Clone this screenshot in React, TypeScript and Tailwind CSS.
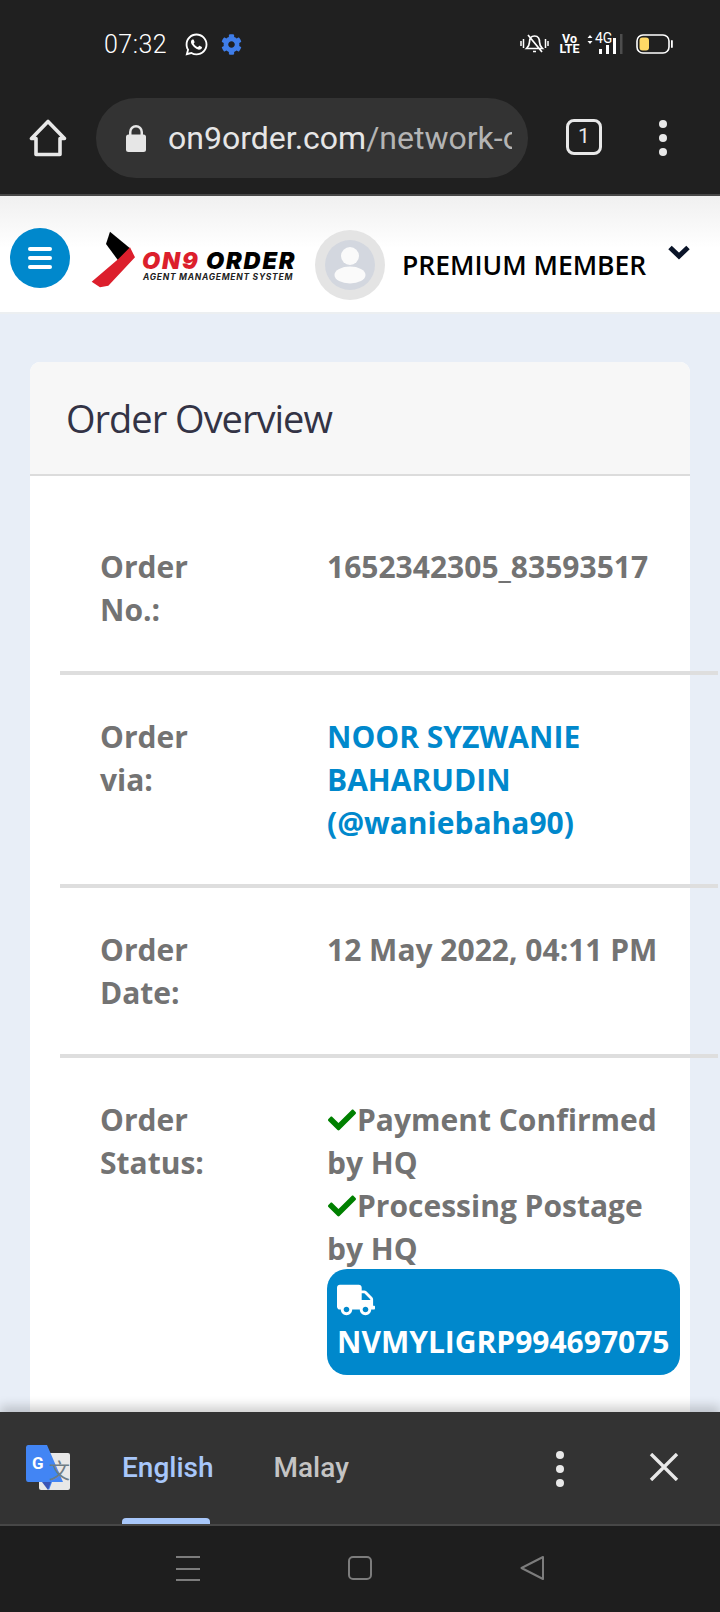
import { FaWhatsapp, FaCog, FaTruck, FaCheck } from "react-icons/fa";

function Row({ label, children, last }: { label: React.ReactNode; children: React.ReactNode; last?: boolean }) {
  return (
    <div className={`grid w-[658px] grid-cols-[227px_340px] pl-10 ${last ? "pt-[40px]" : "border-b-4 border-[#dedede] pb-[40px] pt-[40px]"}`}>
      <div className="font-bold text-[#737373]">{label}</div>
      <div className="font-bold text-[#737373]">{children}</div>
    </div>
  );
}

function Status({ children }: { children: React.ReactNode }) {
  return (
    <div>
      <FaCheck className="inline-block h-[28px] w-[30px] align-[-3px] text-[#008000]" />
      {children}
    </div>
  );
}

export default function App() {
  return (
    <div className="flex h-[1612px] w-[720px] flex-col overflow-hidden bg-[#e8eef7] font-['Open_Sans',sans-serif]">
      {/* Browser chrome */}
      <div className="h-[196px] shrink-0 border-b-2 border-[#474747] bg-[#202020]">
        <div className="flex h-[88px] items-center pl-[104px] pr-[47px] font-['Roboto',sans-serif] text-white">
          <span className="text-[25px] font-light leading-none tracking-[0.5px]">07:32</span>
          <FaWhatsapp className="ml-[17px] h-[25px] w-[25px]" />
          <FaCog className="ml-[12px] h-[21px] w-[21px] text-[#3f7de8]" />
          <div className="ml-auto flex items-center">
            <svg width="31" height="22" viewBox="0 0 31 22" fill="none" stroke="white" strokeWidth="1.7" className="mr-[11px]">
              <path d="M15.5 3c-4 0-5 3-5 6 0 3-1.500 5-3 6.500h16c-1.500-1.500-3-3.500-3-6.500 0-3-1-6-5-6zM14 18.500h3M9 2l14 17" />
              <path d="M2 8v5M4.500 6v9M29 8v5M26.500 6v9" strokeWidth="1.500" />
            </svg>
            <div className="mr-[9px] flex w-[17px] flex-col items-center font-['Roboto',sans-serif] text-[12.500px] font-bold leading-[10.500px]">
              <span>Vo</span>
              <span>LTE</span>
            </div>
            <div className="relative mr-[13px] h-[20px] w-[36px]">
              <span className="absolute left-[8px] top-[-3px] text-[14px] leading-[15px]">4G</span>
              <svg width="36" height="20" viewBox="0 0 36 20" fill="white">
                <path d="M3 1l2.500 3h-5zM3 10l2.500-3h-5z" />
                <rect x="12" y="15" width="3" height="5" />
                <rect x="19" y="11" width="3" height="9" />
                <rect x="26" y="4" width="3" height="16" />
                <rect x="33" y="0" width="2.500" height="20" fill="#4d4d4d" />
              </svg>
            </div>
            <svg width="37" height="20" viewBox="0 0 37 20">
              <rect x="1" y="1" width="32" height="18" rx="6" fill="none" stroke="white" strokeWidth="1.600" />
              <rect x="3.500" y="3.500" width="9.500" height="13" rx="3" fill="#ffd966" />
              <rect x="35" y="6" width="1.800" height="8" rx="0.900" fill="white" />
            </svg>
          </div>
        </div>
        <div className="flex h-[106px] items-start">
          <svg width="38" height="38" viewBox="0 0 38 38" fill="none" stroke="#e8e8e8" strokeWidth="3.600" strokeLinejoin="round" className="ml-[29px] mt-[31px]">
            <path d="M19 2.500 2.500 19.500h4.500v16h24v-16h4.500z" />
          </svg>
          <div className="ml-[29px] mt-[10px] flex h-[80px] w-[432px] items-center rounded-[40px] bg-[#333333] pl-[30px]">
            <svg width="20" height="27" viewBox="0 0 20 27" fill="#e6e6e6">
              <path d="M3 10V7a7 7 0 0 1 14 0v3h-2.500V7a4.500 4.500 0 0 0-9 0v3z" />
              <rect x="0" y="9.500" width="20" height="17.500" rx="2.500" />
            </svg>
            <div className="ml-[22px] w-[344px] overflow-hidden whitespace-nowrap font-['Roboto',sans-serif] text-[32px] leading-none text-[#b4b4b4]">
              <span className="text-[#e6e6e6]">on9order.com</span>/network-order
            </div>
          </div>
          <div className="ml-[38px] mt-[31px] flex h-[36px] w-[36px] items-center justify-center rounded-[8px] border-[3.5px] border-[#e8e8e8] font-['Roboto',sans-serif] text-[21px] text-[#e8e8e8]">
            1
          </div>
          <div className="ml-[57px] mt-[32px] flex flex-col gap-[6px]">
            <span className="h-[8px] w-[8px] rounded-full bg-[#e8e8e8]" />
            <span className="h-[8px] w-[8px] rounded-full bg-[#e8e8e8]" />
            <span className="h-[8px] w-[8px] rounded-full bg-[#e8e8e8]" />
          </div>
        </div>
      </div>

      {/* Site nav */}
      <div className="flex h-[118px] shrink-0 items-start border-b-2 border-[#eceff1] bg-gradient-to-b from-[#f0f0f0] via-white via-[45%] to-white pl-[10px]">
        <div className="mt-[32px] flex h-[60px] w-[60px] flex-col items-center justify-center gap-[5px] rounded-full bg-[#0088cc]">
          <span className="h-[4px] w-[24px] rounded-[2px] bg-white" />
          <span className="h-[4px] w-[24px] rounded-[2px] bg-white" />
          <span className="h-[4px] w-[24px] rounded-[2px] bg-white" />
        </div>
        <div className="relative ml-[21px] mt-[36px] h-[60px] w-[206px]">
          <svg width="70" height="60" viewBox="0 0 210 180" className="ml-[-1px] mt-[-3px]">
            <path d="M60 8 48 45 85 95 120 58z" fill="#000" />
            <path d="M120 55 135 85 55 170 30 175 5 158 85 90z" fill="#dc1f2c" />
          </svg>
          <div className="absolute left-[51px] top-[16px] whitespace-nowrap font-['Inter',sans-serif] text-[23.500px] font-black italic leading-[26px] tracking-[1.800px]">
            <span className="text-[#dc1f2c]">ON9</span> <span className="text-black">ORDER</span>
          </div>
          <div className="absolute left-[52px] top-[40px] whitespace-nowrap font-['Inter',sans-serif] text-[8.500px] font-bold italic leading-[10px] tracking-[0.72px] text-[#222]">
            AGENT MANAGEMENT SYSTEM
          </div>
        </div>
        <div className="ml-[18px] mt-[34px] flex h-[70px] w-[70px] items-center justify-center rounded-full bg-[#e4e4e4]">
          <div className="flex h-[50px] w-[50px] items-center justify-center overflow-hidden rounded-full bg-[#d3d7df]">
            <svg width="50" height="50" viewBox="0 0 50 50" fill="#fafafa">
              <ellipse cx="25" cy="16" rx="9" ry="9" />
              <ellipse cx="25" cy="35" rx="15.500" ry="8.500" />
            </svg>
          </div>
        </div>
        <div className="ml-[17px] mt-[50px] whitespace-nowrap text-[26.500px] font-semibold leading-[38px] text-black">PREMIUM MEMBER</div>
        <svg width="22" height="15" viewBox="0 0 22 15" fill="none" stroke="#0a1428" strokeWidth="5" className="ml-[22px] mt-[49px]">
          <path d="M2 2.500 11 11 20 2.500" />
        </svg>
      </div>

      {/* Main */}
      <div className="min-h-0 flex-1 overflow-hidden pl-[30px] pr-[30px] pt-[48px]">
        <div className="h-[1100px] rounded-[10px] bg-white">
          <div className="flex h-[114px] items-center rounded-t-[10px] border-b-2 border-[#dcdcdc] bg-[#f7f7f7] pl-[36px] text-[38px] tracking-[-1px] text-[#333345]">
            Order Overview
          </div>
          <div className="ml-[30px] pt-[29px] text-[30px] leading-[43px]">
            <Row label={<>Order<br />No.:</>}>1652342305_83593517</Row>
            <Row label={<>Order<br />via:</>}>
              <span className="text-[#0088cc]">NOOR SYZWANIE<br />BAHARUDIN<br />(@waniebaha90)</span>
            </Row>
            <Row label={<>Order<br />Date:</>}>12 May 2022, 04:11 PM</Row>
            <Row last label={<>Order<br />Status:</>}>
              <Status>Payment Confirmed</Status>
              <div>by HQ</div>
              <Status>Processing Postage</Status>
              <div>by HQ</div>
              <div className="mt-[-1px] w-[353px] rounded-[20px] bg-[#0088cc] px-[10px] pb-[12px] pt-[15px] font-bold text-white">
                <FaTruck className="h-[32px] w-[38px]" />
                <div className="mt-[4px] whitespace-nowrap">NVMYLIGRP994697075</div>
              </div>
            </Row>
          </div>
        </div>
      </div>

      {/* Translate bar */}
      <div className="relative h-[114px] shrink-0 border-b-2 border-[#474747] bg-[#333333] shadow-[0_-6px_10px_rgba(0,0,0,0.18)]">
        <div className="flex h-[112px] items-start">
          <svg width="46" height="46" viewBox="0 0 46 46" className="ml-[25px] mt-[33px]">
            <rect x="14" y="8" width="31" height="37" rx="2" fill="#e8e8e8" />
            <path d="M3 0h19l16 37H27l-3 8-6-8H3a2.500 2.500 0 0 1-2-2.500V2.500A2.500 2.500 0 0 1 3 0z" fill="#4285f4" />
            <path d="M17 37h9l-3 8z" fill="#3b55b5" />
            <text x="7" y="24" fontSize="17" fontWeight="700" fill="#ffffff" fontFamily="Roboto, sans-serif">G</text>
            <text x="24" y="33" fontSize="21" fill="#6f7d85" fontFamily="'Noto Sans CJK SC', sans-serif">文</text>
          </svg>
          <div className="relative ml-[51px] mt-[35px] h-[77px] font-['Roboto',sans-serif] text-[28px] font-medium leading-[42px] text-[#a8c7fa]">
            English
            <span className="absolute bottom-0 left-0 h-[6px] w-[88px] rounded-t-[4px] bg-[#a8c7fa]" />
          </div>
          <div className="ml-[60px] mt-[35px] font-['Roboto',sans-serif] text-[28px] font-medium leading-[42px] text-[#c4c4c4]">Malay</div>
          <div className="ml-auto mt-[39px] flex flex-col gap-[6px]">
            <span className="h-[8px] w-[8px] rounded-full bg-[#e8e8e8]" />
            <span className="h-[8px] w-[8px] rounded-full bg-[#e8e8e8]" />
            <span className="h-[8px] w-[8px] rounded-full bg-[#e8e8e8]" />
          </div>
          <svg width="30" height="28" viewBox="0 0 30 28" fill="none" stroke="#e8e8e8" strokeWidth="3.400" className="ml-[85px] mr-[41px] mt-[41px]">
            <path d="M2 1 28 27M28 1 2 27" />
          </svg>
        </div>
      </div>

      {/* Android nav */}
      <div className="flex h-[86px] shrink-0 items-start bg-[#1e1e1e] pl-[176px]">
        <div className="mt-[30px] flex h-[25px] w-[24px] flex-col justify-between">
          <span className="h-[2px] w-[24px] bg-[#7c7c7c]" />
          <span className="h-[2px] w-[24px] bg-[#7c7c7c]" />
          <span className="h-[2px] w-[24px] bg-[#7c7c7c]" />
        </div>
        <div className="ml-[148px] mt-[30px] h-[24px] w-[24px] rounded-[5px] border-2 border-[#7c7c7c]" />
        <svg width="24" height="26" viewBox="0 0 24 26" fill="none" stroke="#7c7c7c" strokeWidth="2" strokeLinejoin="round" className="ml-[148px] mt-[29px]">
          <path d="M23 2 1.500 13 23 24z" />
        </svg>
      </div>
    </div>
  );
}
